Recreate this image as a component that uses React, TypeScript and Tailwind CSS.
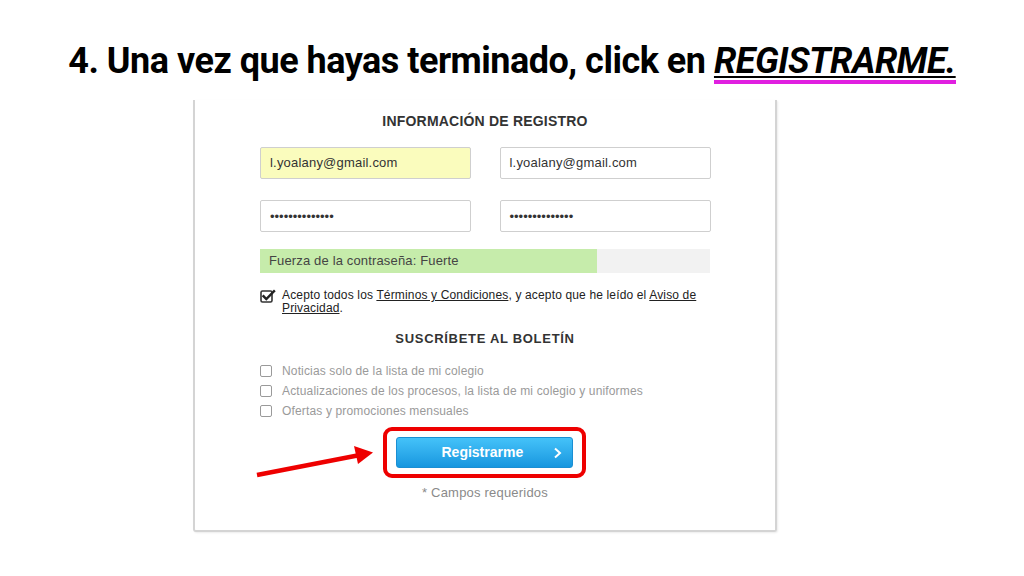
import React from "react";

const CheckedBox = () => (
  <svg width="16" height="14" viewBox="0 0 16 14" className="shrink-0">
    <rect x="1" y="2" width="11" height="11" rx="1.5" fill="none" stroke="#333" strokeWidth="1.6" />
    <path d="M3.5 7.2 L6.3 10 L14 2.2" fill="none" stroke="#222" strokeWidth="2.4" strokeLinecap="square" />
  </svg>
);

const EmptyBox = () => (
  <span className="inline-block h-[12px] w-[12px] shrink-0 rounded-[2px] border border-[#9a9a9a] bg-white" />
);

const NEWSLETTER = [
  "Noticias solo de la lista de mi colegio",
  "Actualizaciones de los procesos, la lista de mi colegio y uniformes",
  "Ofertas y promociones mensuales",
];

const DOTS = "••••••••••••••";

export default function App() {
  return (
    <div className="relative h-[576px] w-[1024px] overflow-hidden bg-white">
      {/* Slide title */}
      <h1 className="pt-[38px] text-center text-[36px] font-bold leading-[46px] tracking-[-0.5px] text-black [font-family:Roboto,'Liberation_Sans',sans-serif]">
        4. Una vez que hayas terminado, click en{" "}
        <span className="inline-block border-b-[4px] border-[#e020e0] leading-[38px] italic underline decoration-[2px] underline-offset-[3px]">REGISTRARME.</span>
      </h1>

      {/* Form screenshot */}
      <div className="ml-[193px] mt-[16px] h-[432px] w-[584px] rounded-b-[3px] border-x-2 border-b-2 border-[#d4d4d4] bg-white shadow-[1px_1px_2px_rgba(0,0,0,0.08)] [font-family:'Liberation_Sans',Arial,sans-serif]">
        <div className="mx-auto flex w-[450px] flex-col">
          <h2 className="mt-[13px] text-center text-[14px] font-bold leading-[16px] tracking-[0.2px] text-[#333]">INFORMACIÓN DE REGISTRO</h2>

          <div className="mt-[18px] grid grid-cols-2 gap-x-[29px] gap-y-[21px] text-[13px] tracking-[0.2px] text-[#333]">
            <div className="flex h-[32px] w-[211px] items-center rounded-[2px] border border-[#cfcfcf] bg-[#fafcbd] px-[9px]">l.yoalany@gmail.com</div>
            <div className="flex h-[32px] w-[211px] items-center rounded-[2px] border border-[#cfcfcf] bg-white px-[9px]">l.yoalany@gmail.com</div>
            <div className="flex h-[32px] w-[211px] items-center rounded-[2px] border border-[#cfcfcf] bg-white px-[9px] leading-none tracking-normal">{DOTS}</div>
            <div className="flex h-[32px] w-[211px] items-center rounded-[2px] border border-[#cfcfcf] bg-white px-[9px] leading-none tracking-normal">{DOTS}</div>
          </div>

          <div className="mt-[17px] flex h-[24px] bg-[#f2f2f2]">
            <div className="flex w-[337px] items-center bg-[#c6ecab] px-[9px] text-[13px] tracking-[0.15px] text-[#444]">Fuerza de la contraseña: Fuerte</div>
          </div>

          <div className="mt-[16px] flex gap-[6px]">
            <CheckedBox />
            <div className="flex flex-col text-[12px] leading-[13px] tracking-[0.15px] text-[#222]">
              <p>
                Acepto todos los <span className="underline">Términos y Condiciones</span>, y acepto que he leído el{" "}
                <span className="underline">Aviso de</span>
              </p>
              <p>
                <span className="underline">Privacidad</span>.
              </p>
            </div>
          </div>

          <h2 className="mt-[16px] text-center text-[13px] font-bold leading-[16px] tracking-[0.7px] text-[#333]">SUSCRÍBETE AL BOLETÍN</h2>

          <div className="mt-[17px] flex flex-col gap-[6px]">
            {NEWSLETTER.map((item) => (
              <label key={item} className="flex h-[14px] items-center gap-[10px] text-[12px] leading-[14px] tracking-[0.15px] text-[#9a9a9a]">
                <EmptyBox />
                {item}
              </label>
            ))}
          </div>

          <div className="mt-[9px] flex justify-center pr-[2px]">
            <div className="rounded-[9px] border-4 border-[#ee0000] px-[9px] py-[6px]">
              <button className="flex h-[31px] w-[177px] items-center rounded-[3px] border border-[#1a8fd3] bg-gradient-to-b from-[#44c2f9] to-[#1597df] pl-[45px] pr-[10px] text-[14px] font-bold text-white">
                <span className="flex-1 text-left">Registrarme</span>
                <svg width="9" height="12" viewBox="0 0 9 12">
                  <path d="M2 1.5 L7 6 L2 10.5" fill="none" stroke="white" strokeWidth="2" />
                </svg>
              </button>
            </div>
          </div>

          <p className="mt-[7px] text-center text-[13px] leading-[15px] tracking-[0.2px] text-[#8a8a8a]">* Campos requeridos</p>
        </div>
      </div>

      {/* Annotation arrow */}
      <svg className="absolute left-[250px] top-[440px]" width="130" height="45" viewBox="0 0 130 45">
        <line x1="7" y1="35" x2="110" y2="15" stroke="#ee0000" strokeWidth="4.5" />
        <polygon points="123,12.5 104,6 108,24" fill="#ee0000" />
      </svg>
    </div>
  );
}
